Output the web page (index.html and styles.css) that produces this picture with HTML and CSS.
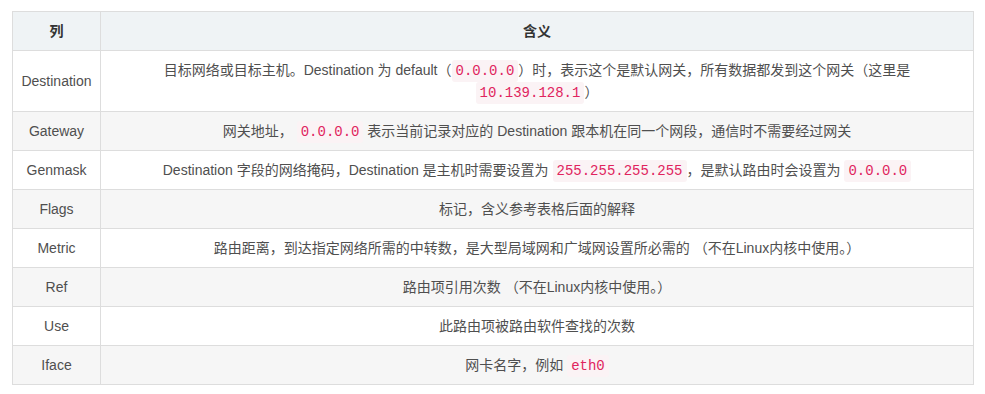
FILE: index.html
```html
<!DOCTYPE html>
<html lang="zh-CN">
<head>
<meta charset="utf-8">
<link rel="stylesheet" href="styles.css">
</head>
<body>
<div class="wrap">
<table class="route-table">
  <thead>
    <tr><th class="col-name">列</th><th>含义</th></tr>
  </thead>
  <tbody>
    <tr><td>Destination</td><td>目标网络或目标主机。Destination 为 default（<code>0.0.0.0</code>）时，表示这个是默认网关，所有数据都发到这个网关（这里是 <code>10.139.128.1</code>）</td></tr>
    <tr><td>Gateway</td><td>网关地址， <code>0.0.0.0</code> 表示当前记录对应的 Destination 跟本机在同一个网段，通信时不需要经过网关</td></tr>
    <tr><td>Genmask</td><td>Destination 字段的网络掩码，Destination 是主机时需要设置为 <code>255.255.255.255</code>，是默认路由时会设置为 <code>0.0.0.0</code></td></tr>
    <tr><td>Flags</td><td>标记，含义参考表格后面的解释</td></tr>
    <tr><td>Metric</td><td>路由距离，到达指定网络所需的中转数，是大型局域网和广域网设置所必需的 （不在Linux内核中使用。）</td></tr>
    <tr><td>Ref</td><td>路由项引用次数 （不在Linux内核中使用。）</td></tr>
    <tr><td>Use</td><td>此路由项被路由软件查找的次数</td></tr>
    <tr><td>Iface</td><td>网卡名字，例如 <code>eth0</code></td></tr>
  </tbody>
</table>
</div>
</body>
</html>
```
FILE: styles.css
```css
html, body {
  margin: 0;
  padding: 0;
  background: #fff;
}
.wrap {
  padding: 11px 12px;
}
.route-table {
  width: 962px;
  border-collapse: collapse;
  font-family: "Liberation Sans", "Noto Sans CJK SC", sans-serif;
  font-size: 14px;
  line-height: 22px;
  color: #4f4f4f;
}
.route-table th,
.route-table td {
  border: 1px solid #dddddd;
  padding: 8px 8px;
  text-align: center;
}
.route-table th {
  background: #eff3f5;
  color: #333;
  font-weight: bold;
}
.route-table .col-name {
  width: 71px;
}
.route-table tbody tr:nth-child(even) td {
  background: #f6f6f6;
}
.route-table code {
  font-family: "Liberation Mono", "DejaVu Sans Mono", monospace;
  font-size: 14px;
  line-height: 14px;
  color: #e0245e;
  background: #fbf3f5;
  padding: 3px 4px;
  border-radius: 3px;
}
```
